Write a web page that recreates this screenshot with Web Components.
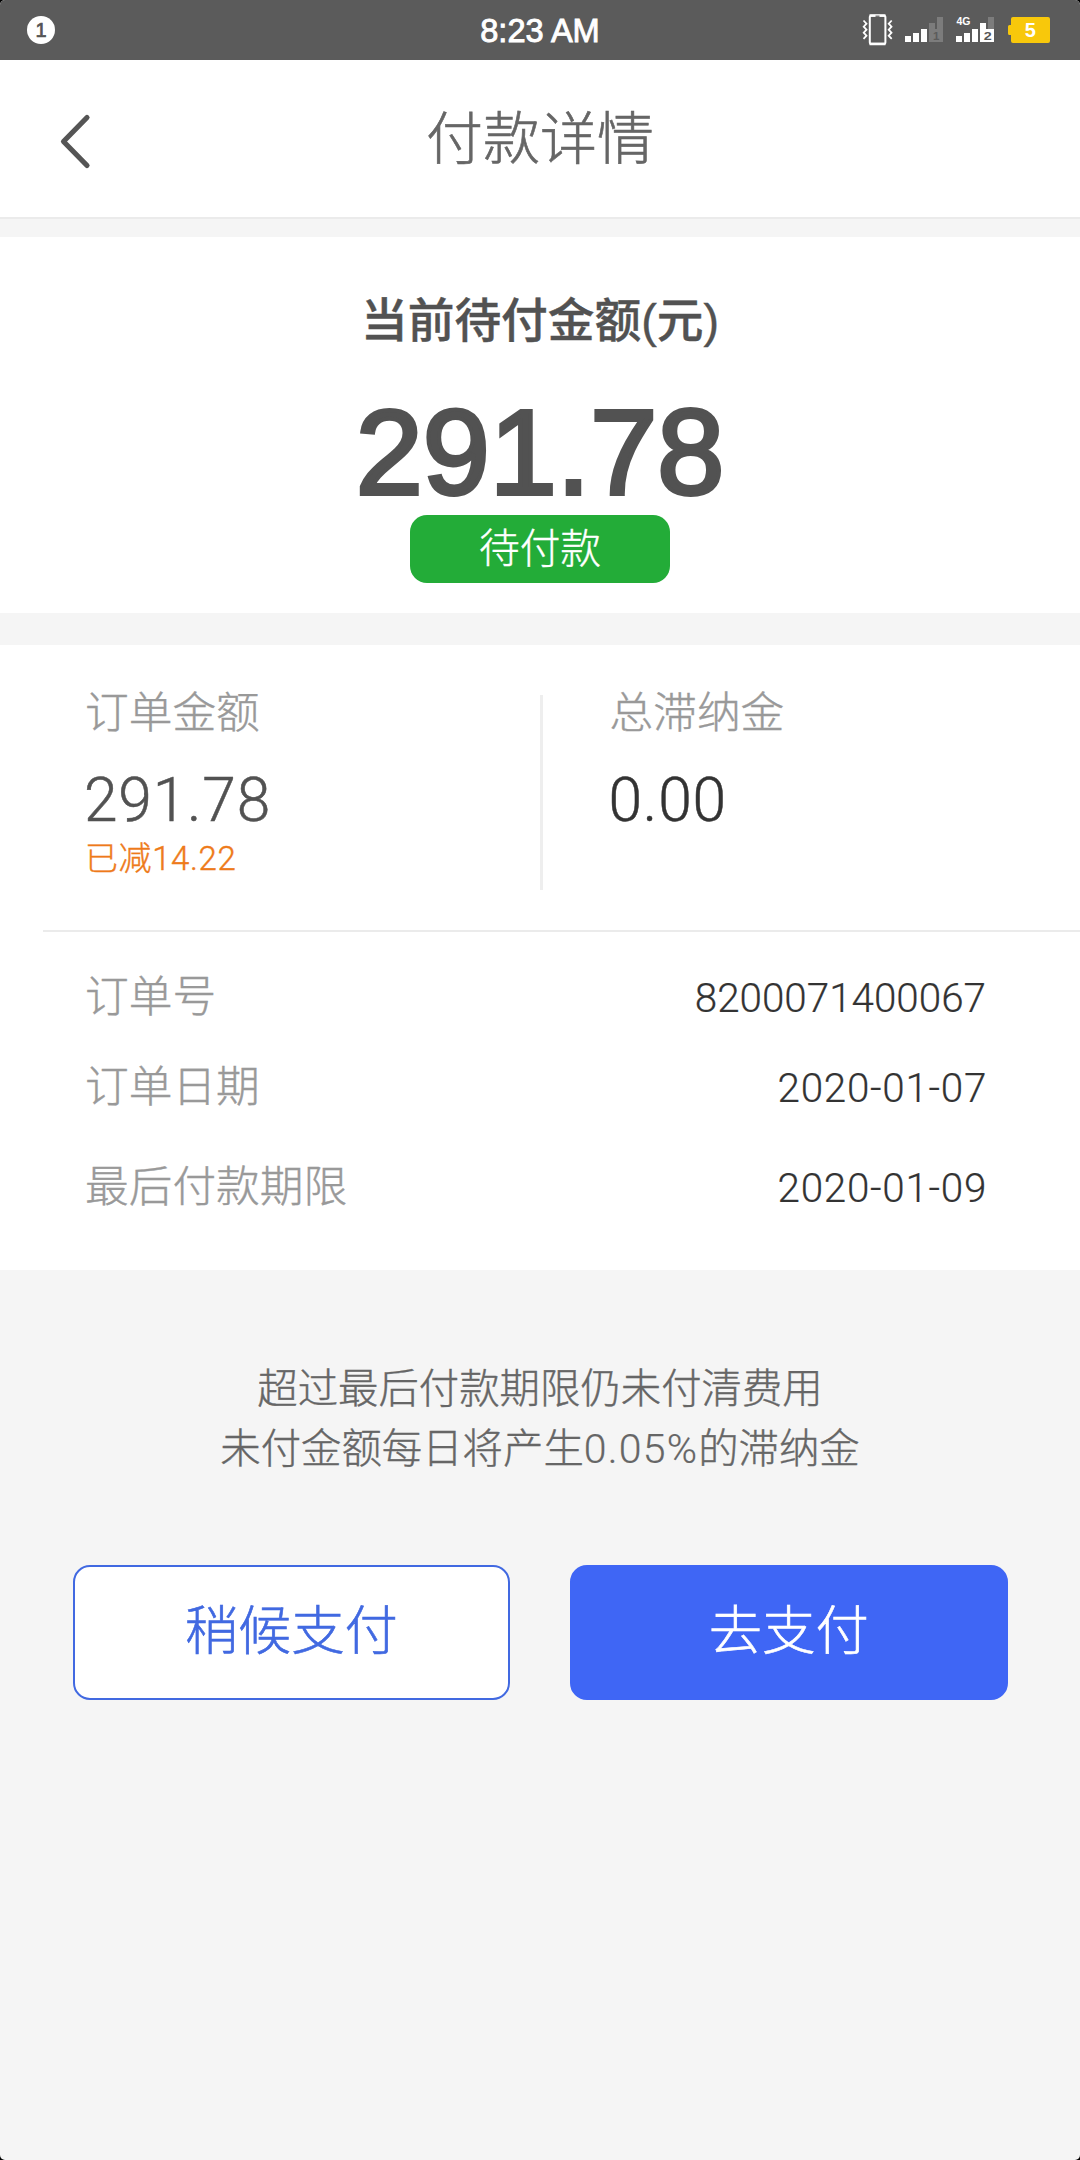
<!DOCTYPE html>
<html lang="zh-CN">
<head>
<meta charset="utf-8">
<title>付款详情</title>
<style>
html,body{margin:0;background:#000}
body{font-family:"Noto Sans CJK SC",sans-serif;font-weight:300}
</style>
</head>
<body>
<pay-app>
  <status-bar>8:23 AM</status-bar>
  <nav-header>付款详情</nav-header>
  <amount-due amount="291.78" status="待付款">当前待付金额(元)</amount-due>
  <order-card>
    <money-cell slot="left" label="订单金额" value="291.78" note="已减14.22"></money-cell>
    <money-cell slot="right" label="总滞纳金" value="0.00" dark></money-cell>
    <info-row label="订单号">8200071400067</info-row>
    <info-row label="订单日期" date>2020-01-07</info-row>
    <info-row label="最后付款期限" date last>2020-01-09</info-row>
  </order-card>
  <late-notice><div>超过最后付款期限仍未付清费用</div><div>未付金额每日将产生<num-text>0.05%</num-text>的滞纳金</div></late-notice>
  <button-bar>
    <pay-button>稍候支付</pay-button>
    <pay-button primary>去支付</pay-button>
  </button-bar>
</pay-app>
<script>
const define = (name, render) => customElements.define(name, class extends HTMLElement {
  connectedCallback() {
    if (this.shadowRoot) return;
    this.attachShadow({mode: 'open'}).innerHTML = render(this);
  }
});

define('pay-app', () => `<style>
:host{display:flex;flex-direction:column;width:1080px;height:2160px;background:#f5f5f5;border-radius:5px;overflow:hidden;-webkit-text-stroke:.4px currentColor}
</style><slot></slot>`);

define('num-text', () => `<style>:host{font-family:Roboto,sans-serif;font-size:41px;line-height:1;letter-spacing:1.2px;-webkit-text-stroke:.2px currentColor}</style><slot></slot>`);

define('status-bar', () => `<style>
:host{display:grid;grid-template-columns:1fr auto 1fr;align-items:center;height:60px;background:#5b5b5b;color:#fff;font-family:"Liberation Sans",sans-serif;font-weight:400}
.time{font-size:32.600px;line-height:58px;padding-top:2px;-webkit-text-stroke:.9px #fff}
.badge{margin-left:27px;width:28px;height:28px;border-radius:50%;background:#fff;color:#555;font-size:20px;line-height:28px;text-align:center;-webkit-text-stroke:.7px #555}
svg{justify-self:end;display:block;-webkit-text-stroke:0}
text{font-family:"Liberation Sans",sans-serif;font-weight:700}
</style>
<div class="badge">1</div><div class="time"><slot></slot></div>
<svg width="240" height="60" viewBox="0 0 240 60">
  <rect x="29.8" y="15.8" width="15.6" height="28" rx="1.5" fill="none" stroke="#fff" stroke-width="2"/>
  <path d="M29.5 15.5h16M29.5 44h16" stroke="#fff" stroke-width="2.4"/>
  <path d="M35.5 16.2h4" stroke="#5b5b5b" stroke-width="1.2"/>
  <path d="M23.5 20.5l3 3.2-2.8 3 2.8 3-2.8 3 2.8 3-3 3.1M51.7 20.5l-3 3.2 2.8 3-2.8 3 2.8 3-2.8 3 3 3.1" fill="none" stroke="#fff" stroke-width="1.8"/>
  <path d="M65 36h6v6h-6zM73 33h6v9h-6zM81 29h6v13h-6z" fill="#fff"/>
  <path d="M89 23h6v6h2V17h6v25H89z" fill="#7c7c7c"/>
  <text x="93" y="40" font-size="11.5" fill="#5b5b5b">1</text>
  <path d="M116 36h6v6h-6zM124 33h6v9h-6zM132 29h6v13h-6zM140 23h6v6h8v13h-14z" fill="#fff"/>
  <path d="M148 17h6v12h-6z" fill="#7c7c7c"/>
  <text x="143.7" y="40" font-size="11.5" fill="#555" textLength="8" lengthAdjust="spacingAndGlyphs">2</text>
  <text x="116.5" y="25" font-size="10.5" fill="#fff">4G</text>
  <path d="M173 17h35q2 0 2 2v22q0 2-2 2h-35q-2 0-2-2v-6h-1.5q-1.500 0-1.500-1.500v-7q0-1.500 1.500-1.500h1.500v-6q0-2 2-2z" fill="#f8c80b"/>
  <text x="190.300" y="36.500" font-size="20" fill="#fff" text-anchor="middle">5</text>
</svg>`);

define('nav-header', () => `<style>
:host{display:grid;grid-template-columns:1fr auto 1fr;align-items:start;box-sizing:border-box;height:159px;background:#fff;border-bottom:2px solid #ebebeb;color:#666;font-size:57px;line-height:149px;-webkit-text-stroke:.6px currentColor}
svg{display:block;margin:52px 0 0 56px}
</style>
<svg width="40" height="60" viewBox="0 0 40 60"><path d="M31 5.500L7.500 29.500L31 53.500" fill="none" stroke="#555" stroke-width="5.200" stroke-linecap="round" stroke-linejoin="round"/></svg>
<div><slot></slot></div>`);

define('amount-due', el => `<style>
:host{display:flex;flex-direction:column;align-items:center;box-sizing:border-box;height:376px;margin-top:18px;padding-top:53px;background:#fff;color:#525252}
.title{font-family:"Liberation Sans","Noto Sans CJK SC",sans-serif;font-size:46.700px;line-height:62px;font-weight:500;-webkit-text-stroke:.4px currentColor}
.amount{margin-top:46px;font:400 120.500px/110px "Liberation Sans",sans-serif;-webkit-text-stroke:4px currentColor}
.state{box-sizing:border-box;margin-top:7px;width:260px;height:67.500px;border-radius:17px;background:#23ac38;color:#fff;font-size:40.700px;line-height:61.500px;text-align:center}
</style>
<div class="title"><slot></slot></div>
<div class="amount">${el.getAttribute('amount')}</div>
<div class="state">${el.getAttribute('status')}</div>`);

define('order-card', () => `<style>
:host{display:block;box-sizing:border-box;height:625px;margin-top:32px;background:#fff}
.top{display:grid;grid-template-columns:540px 2.500px 1fr;height:285px}
.line{height:195px;margin-top:50px;background:#eee}
hr{margin:0 0 0 43px;border:0;height:2px;background:#ebebeb}
.rows{padding:31px 94px 0 85px}
</style>
<div class="top"><slot name="left"></slot><div class="line"></div><slot name="right"></slot></div>
<hr><div class="rows"><slot></slot></div>`);

define('money-cell', el => `<style>
:host{display:flex;flex-direction:column;padding:34px 0 0 85px;color:#525252}
:host([dark]){padding-left:67px;color:#333}
.label{font-size:43.700px;line-height:60px;color:#999}
.value{margin:32px 0 0 -1px;font-family:Roboto,sans-serif;font-size:60.500px;line-height:60px;letter-spacing:.8px;-webkit-text-stroke:.5px currentColor}
.note{margin-top:8px;font-family:Roboto,"Noto Sans CJK SC",sans-serif;font-size:33px;line-height:40px;letter-spacing:.6px;color:#ee7a1a}
</style>
<div class="label">${el.getAttribute('label')}</div>
<div class="value">${el.getAttribute('value')}</div>
${el.hasAttribute('note') ? `<div class="note">${el.getAttribute('note')}</div>` : ''}`);

define('info-row', el => `<style>
:host{display:flex;justify-content:space-between;align-items:baseline;height:90px;line-height:60px;font-size:43.700px;color:#999}
:host([last]){margin-top:10px}
.value{font-family:Roboto,sans-serif;font-size:40.400px;color:#333;-webkit-text-stroke:.2px currentColor}
:host([date]) .value{letter-spacing:.7px;margin-right:-1px}
</style>
<span>${el.getAttribute('label')}</span><span class="value"><slot></slot></span>`);

define('late-notice', () => `<style>
:host{display:block;height:120px;padding-top:85.500px;text-align:center;font-size:40.400px;line-height:60px;color:#666}
</style><slot></slot>`);

define('button-bar', () => `<style>
:host{display:grid;grid-template-columns:1fr 1fr;gap:60px;margin-top:89.500px;padding:0 72.500px}
</style><slot></slot>`);

define('pay-button', () => `<style>
:host{display:block;box-sizing:border-box;height:135px;border:2.500px solid #4169e1;border-radius:17px;background:#fff;color:#4169e1;font-size:53.300px;line-height:120px;text-align:center;-webkit-text-stroke:.6px currentColor}
:host([primary]){background:#3f66f5;border-color:#3f66f5;color:#fff}
</style><slot></slot>`);
</script>
</body>
</html>
